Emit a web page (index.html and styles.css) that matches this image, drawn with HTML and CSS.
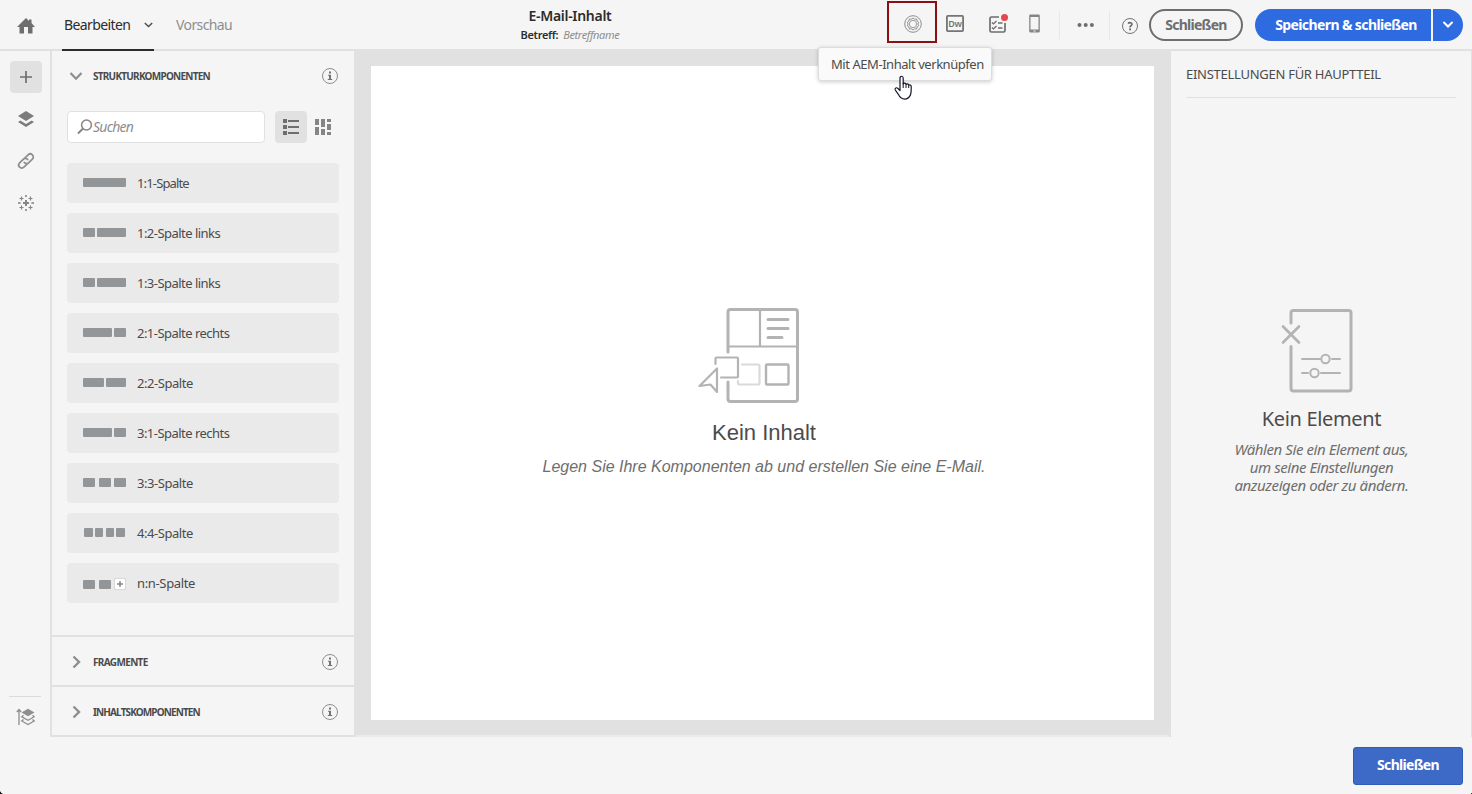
FILE: index.html
```html
<!DOCTYPE html>
<html lang="de">
<head>
<meta charset="utf-8">
<title>E-Mail-Inhalt</title>
<link rel="stylesheet" href="styles.css">
</head>
<body>
<svg class="defs" width="0" height="0">
  <symbol id="info" viewBox="0 0 16 16"><circle cx="8" cy="8" r="7.500" fill="none" stroke="#8e8e8e"/><path d="M7 3.500h2v2H7zM6 6.700h3v4.200h1.200V12H5.800v-1.100H7V7.800H6z" fill="#747474"/></symbol>
  <symbol id="right" viewBox="0 0 10 14"><path d="M1.500 1.500 7 7l-5.500 5.500" fill="none" stroke="#8e8e8e" stroke-width="2.400"/></symbol>
</svg>
<header class="header">
  <nav class="nav">
    <svg class="home" width="18" height="16" viewBox="0 0 18 16"><path d="M9 0 12 3V1.500h2.500V5L18 9h-2.500v6.500H11V9H7v6.500H2.500V9H0z" fill="#6e6e6e"/></svg>
    <a class="tab tab-active"><span class="t-edit">Bearbeiten</span><svg width="9" height="6" viewBox="0 0 9 6"><path d="M.8 1 4.500 4.500 8.200 1" fill="none" stroke="#4b4b4b" stroke-width="1.400"/></svg></a>
    <a class="tab t-preview">Vorschau</a>
  </nav>
  <div class="heading">
    <div class="title">E-Mail-Inhalt</div>
    <div class="subject"><b>Betreff:</b><i>Betreffname</i></div>
  </div>
  <div class="tools">
    <div class="marked"><svg width="18" height="18" viewBox="0 0 18 18" fill="none" stroke="#858585"><circle cx="9" cy="9" r="8.300" stroke-width=".9"/><path d="m9 3 1.600 1.200 2-.2.500 2 1.600 1.200-.8 1.800.8 1.800-1.600 1.200-.5 2-2-.2L9 15l-1.600-1.200-2 .2-.5-2-1.600-1.200.8-1.800-.8-1.800L4.900 6l.5-2 2 .2z" stroke-width=".9"/><circle cx="9" cy="9" r="3.700" stroke-width=".8"/></svg></div>
    <svg class="dw" width="18" height="17" viewBox="0 0 18 17"><rect x=".9" y=".9" width="16.200" height="15.200" rx="1" fill="none" stroke="#747474" stroke-width="1.800"/><text x="9" y="11.500" text-anchor="middle">Dw</text></svg>
    <svg class="check" width="20" height="20" viewBox="0 0 20 20"><path d="M11 3H3.500A1.500 1.500 0 0 0 2 4.500v12A1.500 1.500 0 0 0 3.500 18h12a1.500 1.500 0 0 0 1.500-1.500V9" fill="none" stroke="#6e6e6e" stroke-width="1.700"/><path d="m4 8.500 1.400 1.400L8.500 7M4 13.500l1.400 1.400L8.500 12M10 9h4.500M10 14h4.500" fill="none" stroke="#6e6e6e" stroke-width="1.400"/><circle cx="16.500" cy="3.500" r="3.500" fill="#e34850"/></svg>
    <svg class="phone" width="11" height="19" viewBox="0 0 11 19"><path fill-rule="evenodd" d="M1.500.5h8a1.300 1.300 0 0 1 1.300 1.300v15.400a1.300 1.300 0 0 1-1.300 1.300h-8A1.300 1.300 0 0 1 .2 17.200V1.800A1.300 1.300 0 0 1 1.500.5zM1.500 3v12.500h8V3zM4.500 16.500v1h2v-1z" fill="#858585"/></svg>
    <span class="divider d1"></span>
    <svg class="dots" width="18" height="6" viewBox="0 0 18 6" fill="#6e6e6e"><circle cx="2.500" cy="3" r="2"/><circle cx="8.700" cy="3" r="2"/><circle cx="14.900" cy="3" r="2"/></svg>
    <span class="divider d2"></span>
    <svg class="help" width="16" height="16" viewBox="0 0 16 16"><circle cx="8" cy="8" r="7.500" fill="none" stroke="#747474"/><path d="M6 5.500c1.500-1.500 4-.9 4 .7 0 1.500-2 1.500-2 3.200M7.200 11.400H9" fill="none" stroke="#666" stroke-width="1.600"/></svg>
    <button class="close"><span>Schließen</span></button>
    <button class="save"><span>Speichern &amp; schließen</span></button>
    <button class="more"><svg width="12" height="8" viewBox="0 0 12 8"><path d="m2 1.500 4 4 4-4" fill="none" stroke="#fff" stroke-width="2" stroke-linecap="round"/></svg></button>
  </div>
  <div class="tooltip"><span>Mit AEM-Inhalt verknüpfen</span></div>
  <svg class="cursor" width="20" height="26" viewBox="0 0 20 26"><path d="M7 15.500V3.200C7 .6 10.200.6 10.200 3.200V9c.7-1.500 2.800-1 2.800.5.700-1.200 2.600-.8 2.700.8 1-.9 2.500-.2 2.500 1.300 0 3.500.2 6.500-1 8.800-1.300 2.600-3 3.800-5.500 3.800-3.500 0-5.300-2.600-6.700-5.400L2.300 15c-1-2 1.300-3 2.700-1.500z" fill="#fff" stroke="#15152a" stroke-width="1.200" stroke-linejoin="round"/><path d="M10.200 8v5M13 9.500V13M15.700 10.500V13" fill="none" stroke="#15152a"/></svg>
</header>
<main class="main">
  <aside class="rail">
    <div class="rail-btn active"><svg width="14" height="14" viewBox="0 0 14 14"><path d="M7 1v12M1 7h12" stroke="#6e6e6e" stroke-width="1.700"/></svg></div>
    <div class="rail-btn"><svg width="16" height="16" viewBox="0 0 16 16" fill="#7c7c7c"><path d="m8 0 8 5-8 5-8-5z"/><path d="m0 11 2.300-1.500L8 13l5.700-3.500L16 11l-8 5z"/></svg></div>
    <div class="rail-btn"><svg width="18" height="18" viewBox="0 0 18 18" fill="none" stroke="#8e8e8e" stroke-width="1.700" stroke-linecap="round"><path d="m8.200 5.700 2.900-2.900a3 3 0 0 1 4.300 4.300l-3.600 3.600a3 3 0 0 1-4.500-.2"/><path d="m9.800 12.300-2.900 2.900a3 3 0 0 1-4.300-4.300l3.600-3.600a3 3 0 0 1 4.500.2"/></svg></div>
    <div class="rail-btn"><svg width="18" height="18" viewBox="0 0 18 18" fill="none" stroke="#858585"><path d="M9 6v6M6 9h6" stroke-width="2"/><path d="M9 1v2M8 2h2M9 15v2M8 16h2M1 9h3M2 8v2M14 9h3M16 8v2M4.500 2.500v4M2.500 4.500h4M13.500 2.500v4M11.500 4.500h4M4.500 11.500v4M2.500 13.500h4M13.500 11.500v4M11.500 13.500h4" stroke-width="1.200"/></svg></div>
    <div class="rail-bottom"><svg width="19" height="18" viewBox="0 0 19 18" fill="none" stroke="#8e8e8e"><path d="M3 17V2M.8 4 3 1.500 5.200 4" stroke-width="1.300"/><path d="m12 .8 6.500 3.700L12 8.200 5.500 4.500z" fill="#8e8e8e" stroke="none"/><path d="M7.500 7.300 5.800 8.800 12 12.300l6.200-3.500-1.700-1.500M7.500 11.500 5.800 13l6.200 3.500 6.200-3.500-1.700-1.500" stroke-width="1.300"/></svg></div>
  </aside>
  <section class="panel">
    <div class="section-head"><svg class="down" width="14" height="9" viewBox="0 0 14 9"><path d="m1.500 1 5.500 5.700L12.500 1" fill="none" stroke="#8e8e8e" stroke-width="2.300"/></svg><span class="s1">STRUKTURKOMPONENTEN</span><svg class="info"><use href="#info"/></svg></div>
    <div class="search-row">
      <div class="search"><svg width="16" height="16" viewBox="0 0 16 16" fill="none" stroke="#858585"><circle cx="9.500" cy="6" r="4.900" stroke-width="1.500"/><path d="m1 14.500 5-5" stroke-width="2"/></svg><i>Suchen</i></div>
      <div class="view active"><svg width="16" height="16" viewBox="0 0 16 16" fill="#6e6e6e"><path d="M0 0h4v4H0zM0 6h4v4H0zM0 12h4v4H0zM5 1h11v2H5zM5 7h11v2H5zM5 13h11v2H5z"/></svg></div>
      <div class="view"><svg width="16" height="16" viewBox="0 0 16 16" fill="#858585"><path d="M0 0h4v6H0zM0 8h4v8H0zM6 0h4v8H6zM6 10h4v6H6zM12 0h4v3h-4zM12 5h4v6h-4zM12 13h4v3h-4z"/></svg></div>
    </div>
    <ul class="items">
      <li><span class="cols"><b class="w43"></b></span><span class="label l0">1:1-Spalte</span></li>
      <li><span class="cols"><b class="w12"></b><b class="w29"></b></span><span class="label l2">1:2-Spalte links</span></li>
      <li><span class="cols"><b class="w12"></b><b class="w29"></b></span><span class="label l2">1:3-Spalte links</span></li>
      <li><span class="cols"><b class="w29"></b><b class="w12"></b></span><span class="label l3">2:1-Spalte rechts</span></li>
      <li><span class="cols"><b class="w20"></b><b class="w20"></b></span><span class="label l1">2:2-Spalte</span></li>
      <li><span class="cols"><b class="w29"></b><b class="w12"></b></span><span class="label l3">3:1-Spalte rechts</span></li>
      <li><span class="cols"><b class="w12"></b><b class="w12"></b><b class="w12"></b></span><span class="label l1">3:3-Spalte</span></li>
      <li><span class="cols four"><b class="w9"></b><b class="w9"></b><b class="w9"></b><b class="w9"></b></span><span class="label l1">4:4-Spalte</span></li>
      <li><span class="cols nn"><b class="w12"></b><b class="w12"></b><svg width="12" height="12" viewBox="0 0 12 12"><rect x=".5" y=".5" width="11" height="11" fill="#fff" stroke="#bbb" stroke-dasharray="1 1"/><path d="M6 3v6M3 6h6" stroke="#858585" stroke-width="1.500"/></svg></span><span class="label l4">n:n-Spalte</span></li>
    </ul>
    <div class="section-head folded"><svg class="right"><use href="#right"/></svg><span class="s2">FRAGMENTE</span><svg class="info"><use href="#info"/></svg></div>
    <div class="section-head folded"><svg class="right"><use href="#right"/></svg><span class="s3">INHALTSKOMPONENTEN</span><svg class="info"><use href="#info"/></svg></div>
  </section>
  <section class="canvas">
    <div class="page">
      <svg width="102" height="96" viewBox="0 0 102 96" fill="none" stroke="#b3b3b3" stroke-width="3" stroke-linecap="round" stroke-linejoin="round"><path d="M30 44V4q0-2.500 2.500-2.500h64.500q2.500 0 2.500 2.500v87q0 2.500-2.500 2.500H32.500q-2.500 0-2.500-2.500V74"/><path d="M31 38.500h68M62 2v36" stroke-width="2.200"/><path d="M70 11.500h20M70 20.500h20M70 29.500h14"/><path d="M17.500 56v-5.500q0-1 1-1h20.500q1 0 1 1v18q0 1-1 1H23M1.500 78 19 60.500V84l-6.500-7.500z" stroke-width="2.200"/><path d="M44 56.500h16q1.500 0 1.500 1.500v17q0 1.500-1.500 1.500H41.500q-1.500 0-1.500-1.500v-2" stroke="#dadada" stroke-width="2.200"/><rect x="68" y="56.500" width="22.500" height="20" rx="1" stroke-width="2.400"/></svg>
      <h2>Kein Inhalt</h2>
      <p>Legen Sie Ihre Komponenten ab und erstellen Sie eine E-Mail.</p>
    </div>
    <div class="canvas-end"></div>
  </section>
  <aside class="settings">
    <h3><span>EINSTELLUNGEN FÜR HAUPTTEIL</span></h3>
    <div class="empty">
      <svg width="72" height="84" viewBox="0 0 72 84" fill="none" stroke="#b3b3b3" stroke-width="3" stroke-linecap="round"><path d="M10 14V4Q10 1.500 12.500 1.500h55Q70 1.500 70 4v75.500q0 2.500-2.500 2.500h-55Q10 82 10 79.500v-42"/><path d="m2 17.500 16 16M18 17.500 2 33.500" stroke-width="2.600"/><path d="M21 50h18M51 50h8M21 64h6M40 64h19" stroke-width="2"/><circle cx="44.500" cy="50" r="4.200" stroke-width="2"/><circle cx="33.500" cy="64" r="4.200" stroke-width="2"/></svg>
      <h2>Kein Element</h2>
      <p>Wählen Sie ein Element aus,<br>um seine Einstellungen<br>anzuzeigen oder zu ändern.</p>
    </div>
  </aside>
</main>
<footer class="footer"><button><span>Schließen</span></button></footer>
<span class="corner left"></span><span class="corner right-corner"></span>
</body>
</html>
```
FILE: styles.css
```css
* { box-sizing: border-box; }
body { position: relative; margin: 0; width: 1472px; height: 794px; overflow: hidden; background: #f5f5f5; color: #4b4b4b; font-family: "Noto Sans", "Open Sans", sans-serif; font-size: 13px; white-space: nowrap; }
svg { display: block; flex: none; }
.defs { position: absolute; }
button { border: 0; padding: 0; font-family: inherit; font-weight: 700; display: flex; align-items: center; justify-content: center; }

.header { position: relative; height: 51px; border-bottom: 2px solid #e1e1e1; display: flex; align-items: flex-start; }
.nav { display: flex; width: 500px; height: 51px; padding-left: 17px; }
.home { margin: 18px 27px 0 0; }
.tab { display: flex; height: 51px; line-height: 49px; font-size: 14px; color: #8e8e8e; }
.tab-active { width: 92px; justify-content: space-between; padding: 0 1px 0 2px; color: #2c2c2c; border-bottom: 2px solid #2c2c2c; }
.tab-active svg { margin-top: 22px; }
.t-edit { letter-spacing: -0.6px; }
.t-preview { margin-left: 22px; letter-spacing: -0.6px; }
.heading { width: 140px; text-align: center; color: #2c2c2c; }
.title { margin-top: 7px; line-height: 18px; font-size: 14px; font-weight: 600; letter-spacing: -0.3px; }
.subject { line-height: 16px; margin-top: 2px; font-size: 11px; display: flex; justify-content: center; gap: 5px; letter-spacing: -0.35px; }
.subject b { font-weight: 600; }
.subject i { color: #8e8e8e; }
.tools { display: flex; width: 832px; padding-left: 247px; }
.marked { width: 50px; height: 42px; margin-top: 1px; border: 2px solid #8b1014; padding: 12px 0 0 15px; }
.dw { margin: 15px 0 0 9px; }
.dw text { font-size: 9px; font-weight: 600; fill: #747474; letter-spacing: -0.3px; }
.check { margin: 14px 0 0 24px; }
.phone { margin: 14px 0 0 21px; }
.divider { width: 1px; height: 28px; margin-top: 11px; background: #e8e8e8; }
.d1 { margin-left: 19px; }
.dots { margin: 22px 0 0 17px; }
.d2 { margin-left: 14px; }
.help { margin: 18px 0 0 12px; }
.close { width: 94px; height: 32px; margin: 9px 0 0 11px; padding-bottom: 1px; border: 2px solid #6e6e6e; border-radius: 16px; background: transparent; color: #6e6e6e; font-size: 14px; letter-spacing: -0.75px; }
.save { width: 176px; height: 32px; margin: 9px 0 0 12px; padding: 0 0 2px 6px; border-radius: 16px 0 0 16px; background: #2f6be0; color: #fff; font-size: 14px; letter-spacing: -0.6px; }
.more { width: 30px; height: 32px; margin: 9px 0 0 2px; border-radius: 0 16px 16px 0; background: #2f6be0; }
.tooltip { position: absolute; z-index: 2; left: 818px; top: 47px; width: 174px; height: 34px; padding-left: 12px; line-height: 32px; background: #fafafa; border: 1px solid #dcdcdc; border-radius: 3px; box-shadow: 0 1px 4px #0003; letter-spacing: -0.45px; }
.cursor { position: absolute; z-index: 3; left: 893px; top: 75px; }

.main { display: flex; height: 686px; }
.rail { width: 52px; border-right: 2px solid #e1e1e1; padding: 10px 8px 0 10px; display: flex; flex-direction: column; gap: 10px; }
.rail-btn { height: 32px; display: grid; place-items: center; border-radius: 4px; }
.rail-btn.active, .view.active { background: #e1e1e1; }
.rail-bottom { margin: auto 1px 9px -1px; border-top: 1px solid #dcdcdc; padding: 11px 0 2px 7px; }
.panel { width: 302px; border-bottom: 2px solid #e1e1e1; }
.section-head { display: flex; align-items: center; height: 50px; padding: 0 16px 0 17px; font-size: 10px; font-weight: 700; }
.section-head .info { width: 16px; height: 16px; margin-left: auto; }
.section-head .down { margin-right: 10px; }
.right { width: 10px; height: 14px; margin: 0 11px 0 3px; }
.s1 { letter-spacing: -0.75px; }
.s2 { letter-spacing: -0.65px; }
.s3 { letter-spacing: -0.87px; }
.folded { border-top: 2px solid #e1e1e1; padding-top: 2px; }
.search-row { display: flex; padding: 10px 15px 0; }
.search { width: 198px; height: 32px; margin-right: 10px; padding: 0 0 1px 9px; display: flex; align-items: center; background: #fff; border: 1px solid #e1e1e1; border-radius: 4px; font-size: 14px; letter-spacing: -0.75px; color: #8e8e8e; }
.view { width: 32px; height: 32px; display: grid; place-items: center; border-radius: 4px; }
.items { list-style: none; margin: 0; padding: 20px 15px 32px; display: flex; flex-direction: column; gap: 10px; }
.items li { display: flex; align-items: center; height: 40px; padding-left: 16px; border-radius: 4px; background: #eaeaea; }
.cols { display: flex; justify-content: space-between; width: 43px; margin: 0 11px 1px 0; }
.cols b { height: 9px; border-radius: 1px; background: #939699; }
.four { padding: 0 1px; }
.nn { align-items: center; margin-bottom: -2px; }
.w9 { width: 8.500px; }
.w12 { width: 12px; }
.w20 { width: 20.500px; }
.w29 { width: 29px; }
.w43 { width: 43px; }
.l0 { letter-spacing: -0.85px; }
.l1 { letter-spacing: -0.45px; }
.l2, .l3 { letter-spacing: -0.53px; }
.l4 { letter-spacing: -0.35px; }

.canvas { width: 817px; padding-top: 15px; background: #e1e1e1; }
.page { height: 654px; margin: 0 17px 15px; padding-top: 242px; display: flex; flex-direction: column; align-items: center; background: #fff; font-family: "Liberation Sans", Arial, sans-serif; }
.canvas-end { height: 2px; margin: 0 2px; background: #ebebeb; }
.page h2 { margin: 15px 0 0 3px; font-size: 22px; line-height: 28px; font-weight: 400; }
.page p { margin: 10px 0 0 3px; font-size: 16px; line-height: 20px; font-style: italic; color: #6e6e6e; }
.page svg { margin-right: 28px; }
.settings { width: 301px; padding: 0 15px; border-right: 1px solid #e1e1e1; }
.settings h3 { height: 47px; margin: 0; border-bottom: 1px solid #e1e1e1; line-height: 46px; font-size: 13px; font-weight: 400; letter-spacing: -0.27px; }
.empty { margin-top: 211px; display: flex; flex-direction: column; align-items: center; }
.empty svg { margin-right: 9px; }
.empty h2 { margin: 12px 0 0 1px; font-size: 20px; line-height: 28px; font-weight: 400; letter-spacing: -0.35px; }
.empty p { margin: 7px 0 0 1px; text-align: center; font-size: 15px; line-height: 18px; font-style: italic; letter-spacing: -0.42px; color: #6e6e6e; }
.footer { height: 57px; padding: 10px 9px 0; display: flex; justify-content: flex-end; }
.footer button { width: 110px; height: 38px; padding-bottom: 3px; background: #3d69c7; border: 1px solid #315bb8; border-radius: 3px; color: #fff; font-size: 14px; letter-spacing: -0.7px; }
.corner { position: absolute; bottom: 0; width: 5px; height: 5px; }
.left { left: 0; background: radial-gradient(circle at 100% 0, transparent 5px, #1c1418 5.500px); }
.right-corner { right: 0; width: 3px; height: 3px; background: radial-gradient(circle at 0 0, transparent 3px, #333 3.500px); }
```
